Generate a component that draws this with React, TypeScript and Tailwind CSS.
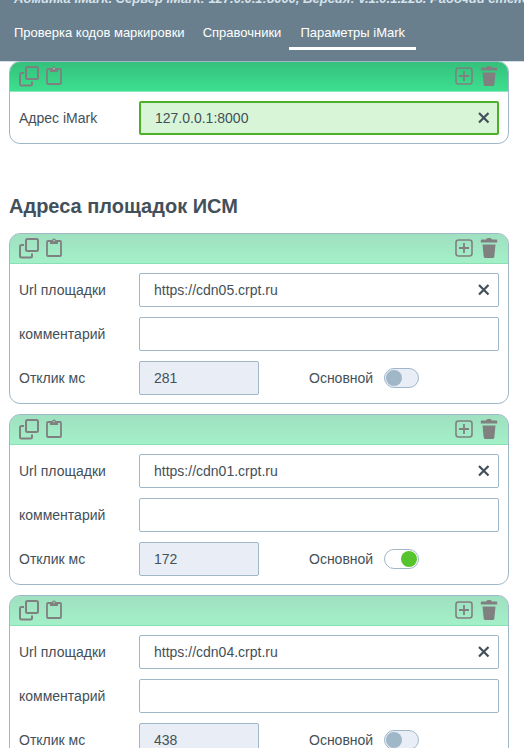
import { useId, useState } from "react";

const GRAY = "#808080";

function CopyIcon() {
  return (
    <svg width="22" height="22" viewBox="0 0 22 22" fill="none" stroke={GRAY} strokeWidth="2" aria-hidden="true">
      <rect x="7" y="2" width="12" height="12" rx="1.5" />
      <path d="M5 8H2.500A1.500 1.500 0 0 0 1 9.500V19A1.500 1.500 0 0 0 2.500 20.500H11.500A1.500 1.500 0 0 0 13 19V16.500" />
    </svg>
  );
}

function PasteIcon() {
  return (
    <svg width="18" height="22" viewBox="0 0 18 22" fill="none" aria-hidden="true">
      <rect x="1" y="4" width="14" height="15" rx="1" stroke={GRAY} strokeWidth="1.800" />
      <path d="M4 3.500H6a2 2 0 0 1 4 0h2v3.500H4z" fill={GRAY} />
      <circle cx="8" cy="3.600" r="0.800" fill="#9fe0c0" />
    </svg>
  );
}

function AddIcon() {
  return (
    <svg width="18" height="22" viewBox="0 0 18 22" fill="none" stroke={GRAY} aria-hidden="true">
      <rect x="1" y="3" width="16" height="16" rx="2.500" strokeWidth="1.600" />
      <path d="M9 6v10M4 11h10" strokeWidth="1.800" />
    </svg>
  );
}

function TrashIcon() {
  return (
    <svg width="18" height="22" viewBox="0 0 18 22" fill={GRAY} aria-hidden="true">
      <path d="M1.500 2.500H6Q6.500 1 8 1h2q1.500 0 2 1.500h4.500q.7 0 .7.700V5.500H.800V3.200q0-.700.700-.700z" />
      <path d="M2.500 7.500h13l-1.200 12q-.2 1.500-1.600 1.500H5.300q-1.400 0-1.600-1.500z" />
    </svg>
  );
}

function CloseIcon() {
  return (
    <svg width="12" height="12" viewBox="0 0 12 12" fill="none" stroke="#435059" strokeWidth="2.200" aria-hidden="true">
      <path d="M1 1l9.500 9.500M10.500 1L1 10.500" />
    </svg>
  );
}

function Card({ active = false, children }: { active?: boolean; children: React.ReactNode }) {
  return (
    <section className="overflow-hidden rounded-[11px] border border-[#a0b7c8] bg-white">
      <div
        className={
          "-mx-px -mt-px flex h-[31px] items-start justify-between rounded-t-[11px] border pt-[3px] pr-[10px] pl-[9px] " +
          (active
            ? "border-[#2fc07a] border-b-[#8ce8bc] bg-linear-to-b from-[#34c07c] to-[#3de08f]"
            : "border-[#5fbe98] border-b-[#8ae0b5] bg-linear-to-b from-[#9fe0c0] to-[#a3f0c8]")
        }
      >
        <div className="flex items-center gap-[5px]">
          <button type="button" aria-label="Копировать"><CopyIcon /></button>
          <button type="button" aria-label="Вставить"><PasteIcon /></button>
        </div>
        <div className="flex items-center gap-[7px]">
          <button type="button" aria-label="Добавить"><AddIcon /></button>
          <button type="button" aria-label="Удалить"><TrashIcon /></button>
        </div>
      </div>
      <div className="flex flex-col gap-[10px] px-[9px] pt-[9px] pb-2">{children}</div>
    </section>
  );
}

function TextRow({ label, initial, clearable = false, active = false }: { label: string; initial: string; clearable?: boolean; active?: boolean }) {
  const id = useId();
  const [value, setValue] = useState(initial);
  return (
    <div className="flex items-center">
      <label htmlFor={id} className="w-[120px] shrink-0">{label}</label>
      <div
        className={
          "flex h-[34px] min-w-0 flex-1 items-center rounded-[2px] " +
          (active ? "border-2 border-[#4cb028] bg-[#d8f5d8] pr-[7px]" : "border border-[#a0b7c8] bg-white pr-2")
        }
      >
        <input
          id={id}
          value={value}
          onChange={(e) => setValue(e.target.value)}
          className="h-full min-w-0 flex-1 bg-transparent px-[14px] outline-none"
        />
        {clearable && (
          <button type="button" aria-label="Очистить" onClick={() => setValue("")}><CloseIcon /></button>
        )}
      </div>
    </div>
  );
}

function SiteCard({ url, response, main }: { url: string; response: string; main: boolean }) {
  const id = useId();
  return (
    <Card>
      <TextRow label="Url площадки" initial={url} clearable />
      <TextRow label="комментарий" initial="" />
      <div className="flex items-center">
        <label htmlFor={id + "r"} className="w-[120px] shrink-0">Отклик мс</label>
        <input
          id={id + "r"}
          readOnly
          value={response}
          className="h-[34px] w-[120px] rounded-[2px] border border-[#a0b7c8] bg-[#e9eef6] px-[14px] outline-none"
        />
        <label htmlFor={id + "m"} className="ml-[50px] w-[75px]">Основной</label>
        <input
          id={id + "m"}
          type="checkbox"
          role="switch"
          defaultChecked={main}
          className="flex h-5 w-[35px] appearance-none items-center rounded-full border border-[#a0b7c8] bg-[#e9eef6] px-px before:size-4 before:rounded-full before:bg-[#a0b7c8] checked:justify-end checked:bg-white checked:before:bg-[#55c42d]"
        />
      </div>
    </Card>
  );
}

const sites = [
  { url: "https://cdn05.crpt.ru", response: "281", main: false },
  { url: "https://cdn01.crpt.ru", response: "172", main: true },
  { url: "https://cdn04.crpt.ru", response: "438", main: false },
];

export default function App() {
  return (
    <div className="h-screen overflow-hidden bg-white font-['Liberation_Sans',Arial,sans-serif] text-[14px] leading-5 text-[#435059]">
      <header className="flex h-[61px] flex-col justify-end overflow-hidden bg-[#697f8d] px-[14px] pb-[11px] text-white shadow-[0_1px_0_#d3dee6]">
        <h1 className="shrink-0 text-[13px] leading-5 font-bold whitespace-nowrap text-[#d6e2ea] italic">
          Админка iMark. Сервер iMark: 127.0.0.1:8000, Версия: v.1.0.1.228. Рабочий стенд 1
        </h1>
        <nav className="mt-[10px] flex shrink-0 text-[13px]">
          <a href="#check" className="h-[31px] border-b-3 border-transparent pt-1 pr-[18px]">Проверка кодов маркировки</a>
          <a href="#refs" className="h-[31px] border-b-3 border-transparent pt-1 pr-2">Справочники</a>
          <a href="#params" className="h-[31px] border-b-3 border-white px-[11px] pt-1">Параметры iMark</a>
        </nav>
      </header>
      <main className="pr-[15px] pl-[9px]">
        <Card active>
          <TextRow label="Адрес iMark" initial="127.0.0.1:8000" clearable active />
        </Card>
        <h2 className="mt-12 mb-[13px] text-[20px] leading-7 font-bold">Адреса площадок ИСМ</h2>
        <div className="flex flex-col gap-[10px]">
          {sites.map((s) => (
            <SiteCard key={s.url} {...s} />
          ))}
        </div>
      </main>
    </div>
  );
}
